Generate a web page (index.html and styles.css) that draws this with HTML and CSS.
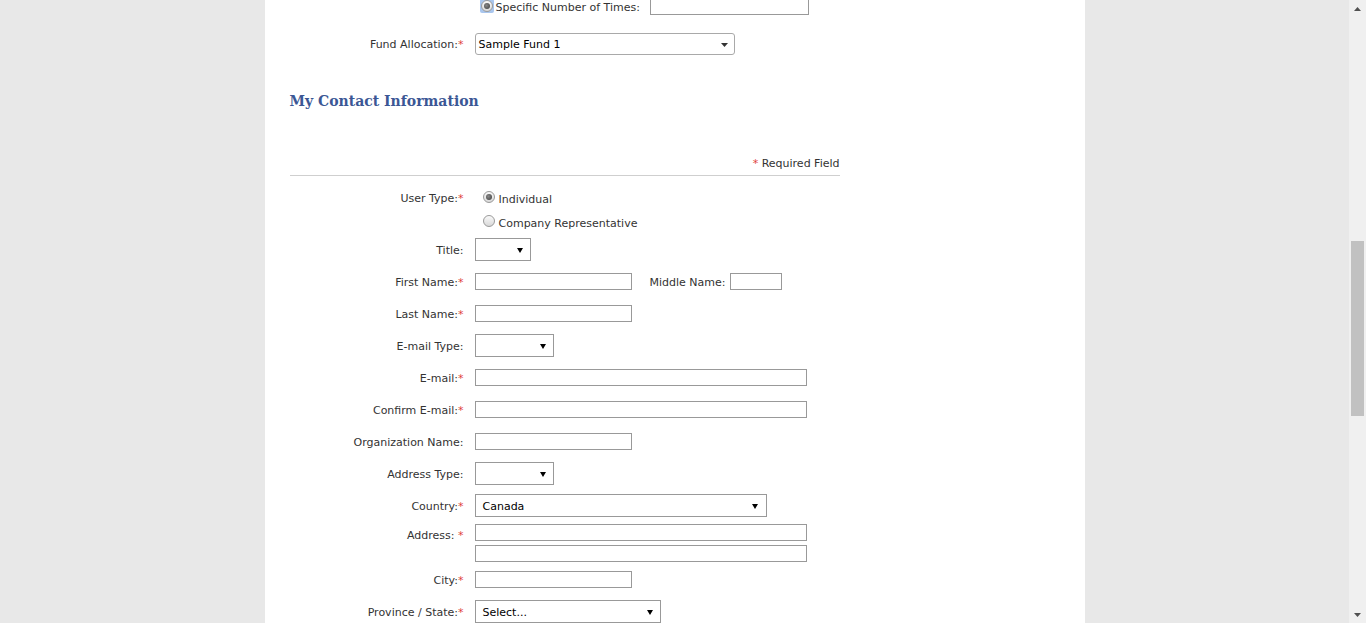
FILE: index.html
```html
<!DOCTYPE html>
<html lang="en">
<head>
<meta charset="utf-8">
<title>My Contact Information</title>
<link rel="stylesheet" href="styles.css">
</head>
<body>
<div class="viewport">
  <div class="page">
    <div class="row row-top">
      <span class="label"></span>
      <div class="control">
        <span class="focus-ring"><span class="radio checked"></span></span>
        <span class="opt-text">Specific Number of Times:</span>
        <span class="input w-times"></span>
      </div>
    </div>

    <div class="row row-fund">
      <span class="label">Fund Allocation:<span class="req">*</span></span>
      <div class="control">
        <div class="native-select">
          <span>Sample Fund 1</span>
          <svg class="native-arrow" width="7" height="4" viewBox="0 0 7 4"><path d="M0 0H7L3.5 4Z" fill="#333"/></svg>
        </div>
      </div>
    </div>

    <h2 class="section-title">My Contact Information</h2>

    <div class="required-note"><span class="req">*</span> Required Field</div>
    <div class="divider"></div>

    <div class="form">
      <div class="row row-radios">
        <span class="label label-top">User Type:<span class="req">*</span></span>
        <div class="radio-list">
          <div class="radio-opt"><span class="radio checked"></span><span class="opt-text">Individual</span></div>
          <div class="radio-opt"><span class="radio"></span><span class="opt-text">Company Representative</span></div>
        </div>
      </div>

      <div class="row">
        <span class="label">Title:</span>
        <div class="control"><div class="select w-title"><span></span><svg class="arrow" width="6" height="5" viewBox="0 0 6 5"><path d="M0 0H6L3 5Z"/></svg></div></div>
      </div>

      <div class="row">
        <span class="label">First Name:<span class="req">*</span></span>
        <div class="control">
          <span class="input w-name"></span>
          <span class="inline-label">Middle Name:</span>
          <span class="input w-middle"></span>
        </div>
      </div>

      <div class="row">
        <span class="label">Last Name:<span class="req">*</span></span>
        <div class="control"><span class="input w-name"></span></div>
      </div>

      <div class="row">
        <span class="label">E-mail Type:</span>
        <div class="control"><div class="select w-type"><span></span><svg class="arrow" width="6" height="5" viewBox="0 0 6 5"><path d="M0 0H6L3 5Z"/></svg></div></div>
      </div>

      <div class="row">
        <span class="label">E-mail:<span class="req">*</span></span>
        <div class="control"><span class="input w-wide"></span></div>
      </div>

      <div class="row">
        <span class="label">Confirm E-mail:<span class="req">*</span></span>
        <div class="control"><span class="input w-wide"></span></div>
      </div>

      <div class="row">
        <span class="label">Organization Name:</span>
        <div class="control"><span class="input w-name"></span></div>
      </div>

      <div class="row">
        <span class="label">Address Type:</span>
        <div class="control"><div class="select w-type"><span></span><svg class="arrow" width="6" height="5" viewBox="0 0 6 5"><path d="M0 0H6L3 5Z"/></svg></div></div>
      </div>

      <div class="row row-country">
        <span class="label">Country:<span class="req">*</span></span>
        <div class="control"><div class="select w-country"><span>Canada</span><svg class="arrow" width="6" height="5" viewBox="0 0 6 5"><path d="M0 0H6L3 5Z"/></svg></div></div>
      </div>

      <div class="row row-address">
        <span class="label label-addr">Address: <span class="req">*</span></span>
        <div class="stack">
          <span class="input w-wide"></span>
          <span class="input w-wide"></span>
        </div>
      </div>

      <div class="row">
        <span class="label">City:<span class="req">*</span></span>
        <div class="control"><span class="input w-name"></span></div>
      </div>

      <div class="row">
        <span class="label">Province / State:<span class="req">*</span></span>
        <div class="control"><div class="select w-prov"><span>Select...</span><svg class="arrow" width="6" height="5" viewBox="0 0 6 5"><path d="M0 0H6L3 5Z"/></svg></div></div>
      </div>
    </div>
  </div>
</div>
<div class="scrollbar">
  <div class="sb-btn"><svg width="7" height="4" viewBox="0 0 7 4"><path d="M0 4H7L3.5 0Z" fill="#505050"/></svg></div>
  <div class="sb-track"><div class="sb-thumb"></div></div>
  <div class="sb-btn"><svg width="7" height="4" viewBox="0 0 7 4"><path d="M0 0H7L3.5 4Z" fill="#505050"/></svg></div>
</div>
</body>
</html>
```

FILE: styles.css
```css
html, body {
  margin: 0;
  padding: 0;
  height: 623px;
  overflow: hidden;
}

body {
  display: flex;
  font-family: "DejaVu Sans", Verdana, sans-serif;
  font-size: 11px;
  color: #333;
}

.viewport {
  flex: 1;
  background: #e8e8e8;
  overflow: hidden;
}

.page {
  width: 820px;
  min-height: 100%;
  margin: 0 auto;
  background: #fff;
  padding: 0 245px 0 25px;
  box-sizing: border-box;
}

.row {
  display: grid;
  grid-template-columns: 174px auto;
  column-gap: 11px;
  align-items: center;
  min-height: 23px;
  margin-bottom: 9px;
}

.label {
  text-align: right;
  line-height: 14px;
  padding-top: 2px;
  white-space: nowrap;
}

.req {
  color: #e0403a;
}

.control {
  display: flex;
  align-items: center;
}

.row-top {
  min-height: 20px;
  margin-top: -4px;
  margin-bottom: 0;
}

.row-top .control {
  padding-left: 5px;
}

.focus-ring {
  display: inline-flex;
  padding: 1px;
  background: #a9c6ee;
  border-radius: 2px;
}

.row-top .opt-text {
  margin-left: 2px;
}

.w-times {
  width: 159px;
  height: 20px;
  margin-left: 10px;
}

.row-fund {
  margin-top: 17px;
  min-height: 22px;
}

.native-select {
  width: 260px;
  height: 22px;
  box-sizing: border-box;
  border: 1px solid #a9a9a9;
  border-radius: 3px;
  display: flex;
  align-items: center;
  justify-content: space-between;
  padding: 1px 6px 0 3px;
  color: #000;
}

.section-title {
  margin: 36px 0 0;
  font-family: "DejaVu Serif", Georgia, serif;
  font-weight: bold;
  font-size: 14px;
  line-height: 20px;
  color: #3b5795;
}

.required-note {
  margin-top: 46px;
  width: 550px;
  text-align: right;
  line-height: 14px;
}

.divider {
  width: 550px;
  margin-top: 4px;
  border-top: 1px solid #cfcfcf;
}

.form {
  padding-top: 10px;
}

.row-radios {
  align-items: start;
  margin-bottom: 4px;
}

.label-top {
  line-height: 24px;
  padding-top: 1px;
}

.radio-list {
  display: flex;
  flex-direction: column;
  padding-left: 8px;
}

.radio-opt {
  display: flex;
  align-items: center;
  height: 24px;
}

.radio-opt .radio {
  margin-bottom: 2px;
}

.opt-text {
  margin-left: 4px;
  padding-top: 2px;
}

.radio {
  display: inline-block;
  width: 12px;
  height: 12px;
  box-sizing: border-box;
  border-radius: 50%;
  border: 1px solid #9a9a9a;
  background: linear-gradient(#fafafa, #d8d8d8);
  position: relative;
}

.radio.checked::after {
  content: "";
  position: absolute;
  left: 2px;
  top: 2px;
  width: 6px;
  height: 6px;
  border-radius: 50%;
  background: radial-gradient(circle at 40% 40%, #888, #3c3c3c);
}

.input {
  display: inline-block;
  height: 17px;
  box-sizing: border-box;
  border: 1px solid #999;
  background: #fff;
}

.w-name { width: 157px; }
.w-middle { width: 52px; }
.w-wide { width: 332px; }

.inline-label {
  margin: 0 4px 0 18px;
  padding-top: 2px;
}

.select {
  height: 23px;
  box-sizing: border-box;
  border: 1px solid #999;
  display: flex;
  align-items: center;
  justify-content: space-between;
  padding: 1px 7px 0 7px;
  color: #000;
}

.select .arrow {
  fill: #000;
}

.w-title { width: 56px; }
.w-type { width: 79px; }
.w-country { width: 292px; padding-right: 8px; }
.w-prov { width: 186px; }

.row-country {
  margin-bottom: 7px;
}

.row-address {
  align-items: start;
  margin-bottom: 6px;
}

.label-addr {
  line-height: 17px;
  padding-top: 3px;
}

.stack {
  display: flex;
  flex-direction: column;
  gap: 4px;
}

.scrollbar {
  width: 17px;
  height: 623px;
  background: #f0f0f0;
  display: flex;
  flex-direction: column;
}

.sb-btn {
  height: 17px;
  display: flex;
  align-items: center;
  justify-content: center;
}

.sb-track {
  flex: 1;
  display: flex;
  flex-direction: column;
  align-items: center;
}

.sb-thumb {
  width: 13px;
  height: 175px;
  margin-top: 224px;
  background: #c1c1c1;
}
```
